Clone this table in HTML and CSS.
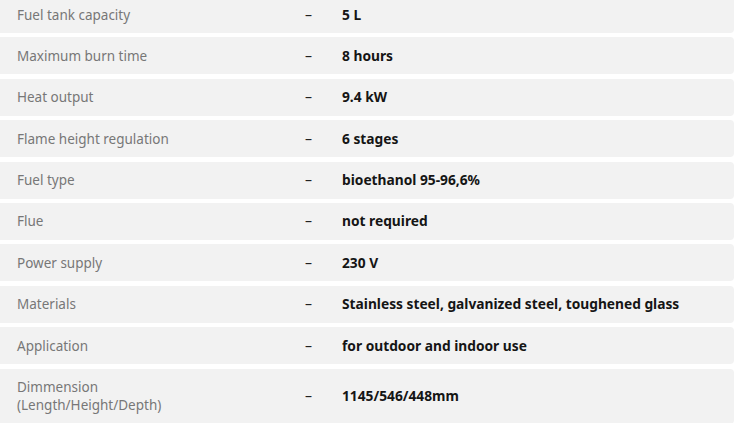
FILE: index.html
```html
<!DOCTYPE html>
<html lang="en">
<head>
<meta charset="utf-8">
<link rel="stylesheet" href="styles.css">
</head>
<body>
<div class="specs">
  <div class="row"><div class="label">Fuel tank capacity</div><div class="dash">–</div><div class="value">5 L</div></div>
  <div class="row"><div class="label">Maximum burn time</div><div class="dash">–</div><div class="value">8 hours</div></div>
  <div class="row"><div class="label">Heat output</div><div class="dash">–</div><div class="value">9.4 kW</div></div>
  <div class="row"><div class="label">Flame height regulation</div><div class="dash">–</div><div class="value">6 stages</div></div>
  <div class="row"><div class="label">Fuel type</div><div class="dash">–</div><div class="value">bioethanol 95-96,6%</div></div>
  <div class="row"><div class="label">Flue</div><div class="dash">–</div><div class="value">not required</div></div>
  <div class="row"><div class="label">Power supply</div><div class="dash">–</div><div class="value">230 V</div></div>
  <div class="row"><div class="label">Materials</div><div class="dash">–</div><div class="value">Stainless steel, galvanized steel, toughened glass</div></div>
  <div class="row"><div class="label">Application</div><div class="dash">–</div><div class="value">for outdoor and indoor use</div></div>
  <div class="row"><div class="label">Dimmension<br>(Length/Height/Depth)</div><div class="dash">–</div><div class="value">1145/546/448mm</div></div>
</div>
</body>
</html>
```

FILE: styles.css
```css
html, body {
  margin: 0;
  padding: 0;
  background: #fff;
}
body {
  font-family: "Noto Sans", sans-serif;
  overflow: hidden;
}
.specs {
  margin: -4px 2px 0 -5px;
  display: flex;
  flex-direction: column;
  gap: 4.4px;
}
.row {
  background: #f2f2f2;
  border-radius: 4px;
  display: grid;
  grid-template-columns: 288px 37px 1fr;
  align-items: center;
  padding: 9.5px 0 9.5px 22px;
  min-height: 18px;
}
.label {
  font-size: 13.5px;
  line-height: 18px;
  color: #777;
}
.dash {
  font-size: 14px;
  line-height: 18px;
  color: #222;
}
.value {
  font-size: 13.75px;
  line-height: 18px;
  font-weight: 700;
  color: #151515;
}
```
